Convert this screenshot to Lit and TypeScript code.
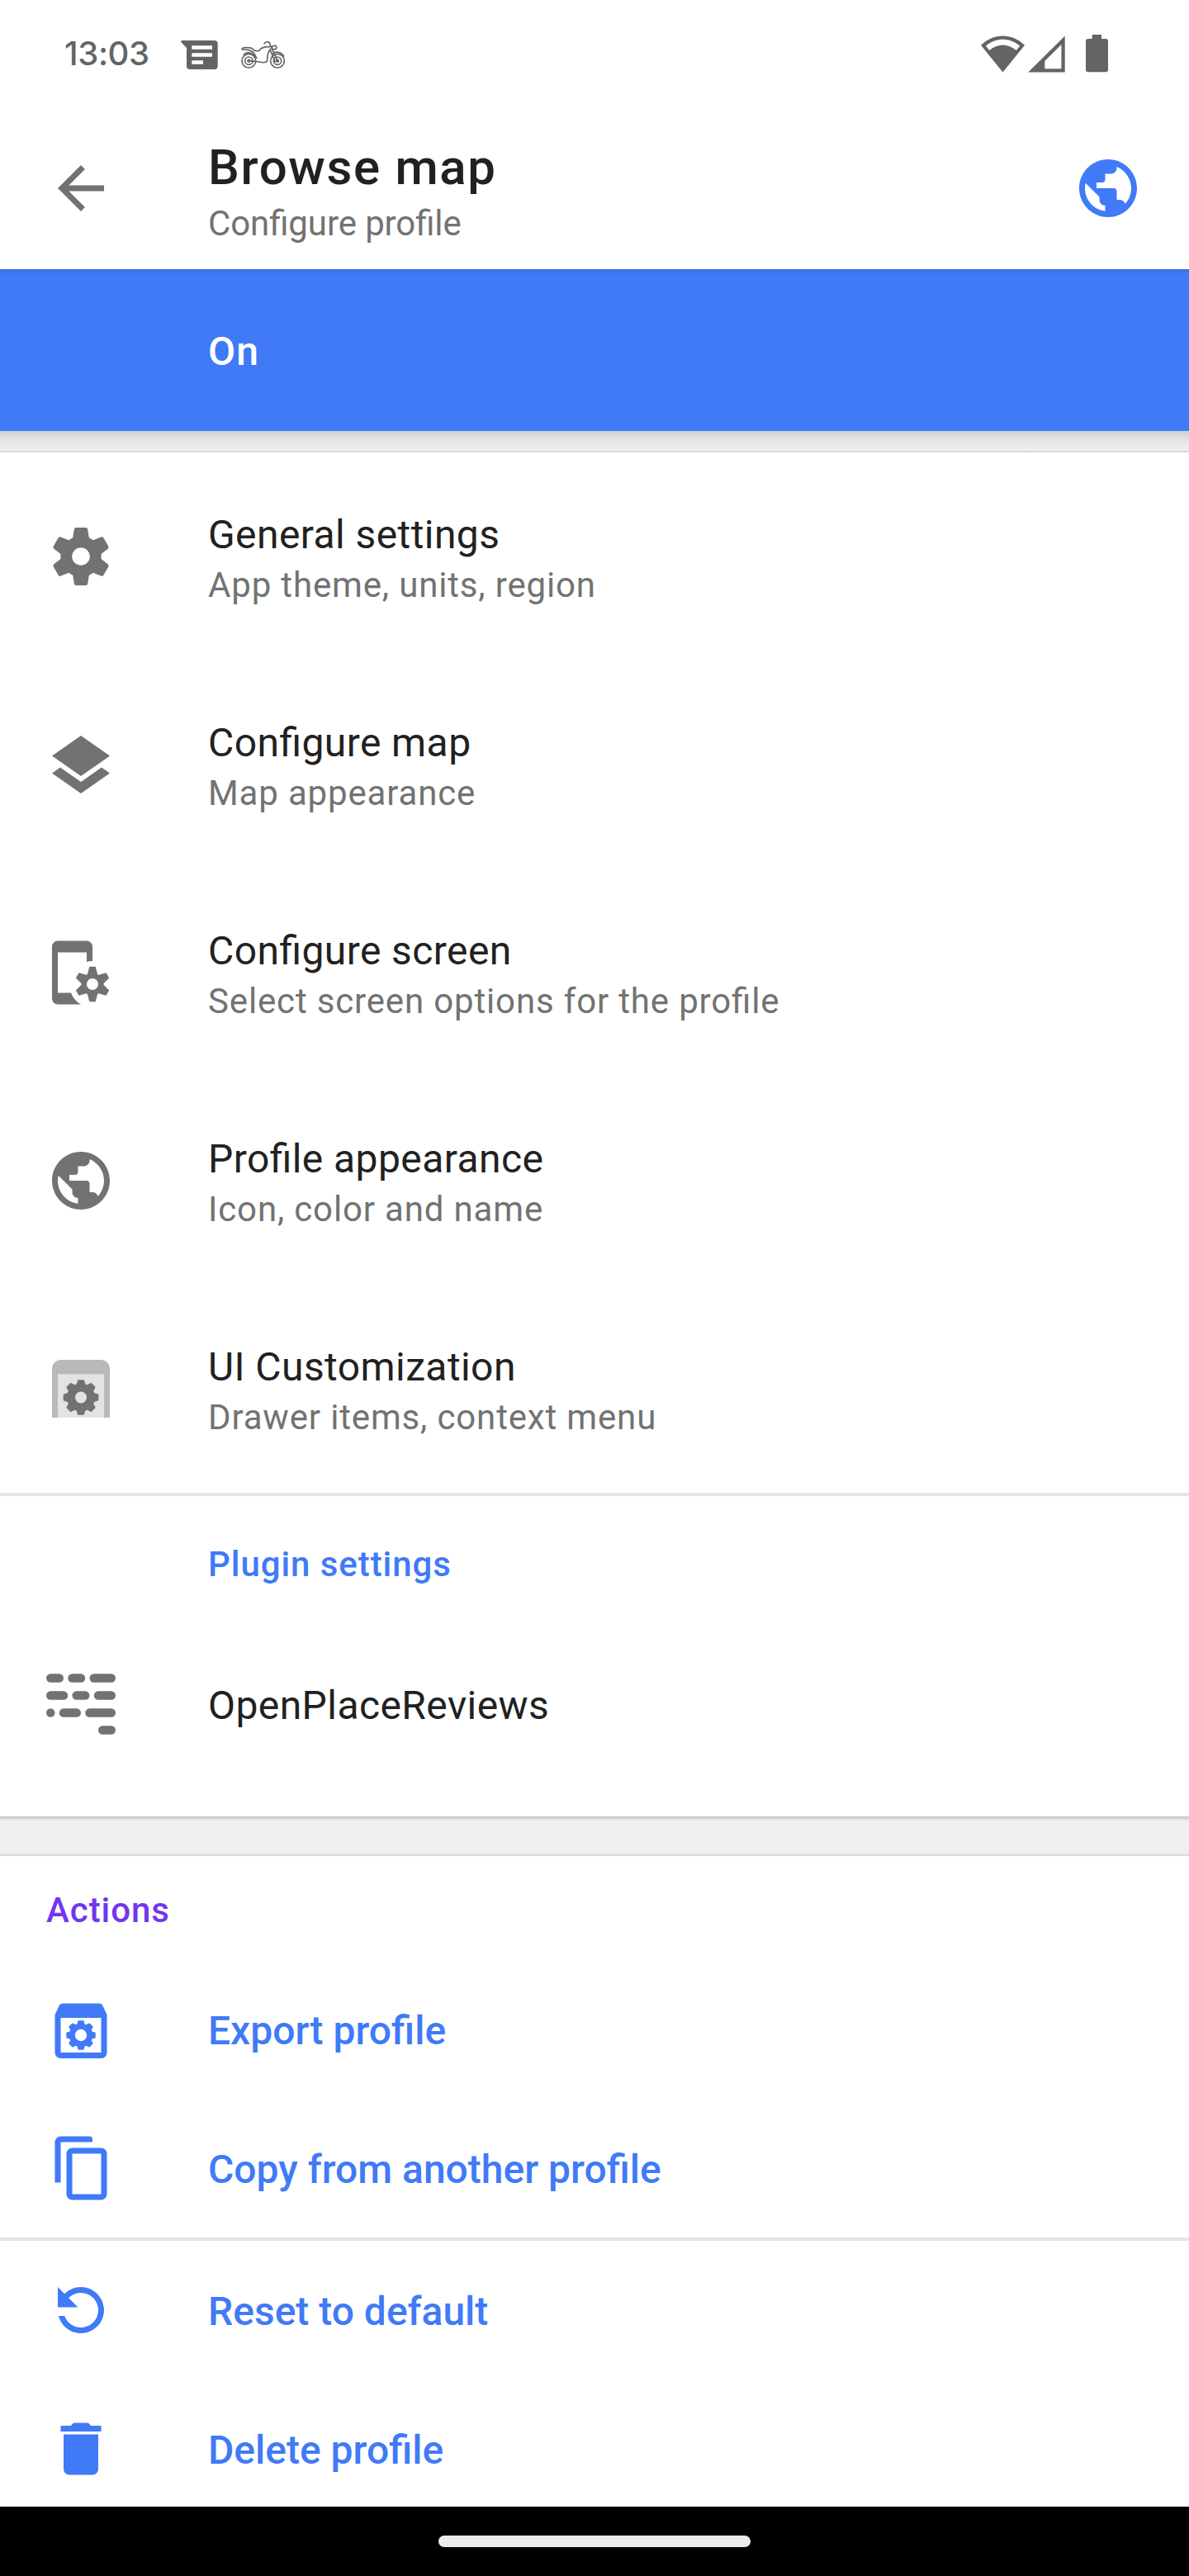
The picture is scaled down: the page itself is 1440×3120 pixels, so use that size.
import { LitElement, html, css, svg, nothing, TemplateResult } from "lit";
import { customElement, property } from "lit/decorators.js";

/** Outline of a straight-toothed cog around (cx, cy), with a round hole cut out. */
function cog(
  cx: number, cy: number, teeth: number,
  outer: number, inner: number, top: number, base: number,
  hole: number, round = 0,
): string {
  const parts: string[] = [];
  for (let i = 0; i < teeth; i++) {
    const a = (i * 2 * Math.PI) / teeth;
    const p = (x: number, y: number) =>
      `${(cx + x * Math.cos(a) - y * Math.sin(a)).toFixed(2)} ${(cy + x * Math.sin(a) + y * Math.cos(a)).toFixed(2)}`;
    parts.push(`${i ? "L" : "M"}${p(-base, -inner)}`);
    if (round) {
      const side = (base - top) * (round / (outer - inner));
      parts.push(`L${p(-top - side, -outer + round)}Q${p(-top, -outer)} ${p(-top + round, -outer)}`);
      parts.push(`L${p(top - round, -outer)}Q${p(top, -outer)} ${p(top + side, -outer + round)}`);
    } else {
      parts.push(`L${p(-top, -outer)}L${p(top, -outer)}`);
    }
    parts.push(`L${p(base, -inner)}`);
  }
  const h = hole;
  return `${parts.join("")}ZM${cx - h} ${cy}a${h} ${h} 0 1 0 ${2 * h} 0a${h} ${h} 0 1 0 ${-2 * h} 0z`;
}

const dashes = [
  [0, 1.5, 6], [7.5, 1.5, 6], [15, 1.5, 9],
  [0, 7.5, 7.5], [9, 7.5, 6], [16.5, 7.5, 7.5],
  [0, 13.5, 3], [4.5, 13.5, 7.5], [13.5, 13.5, 10.5],
  [18, 19.5, 6],
];

const icons: Record<string, TemplateResult> = {
  back: svg`<path d="M20 11H7.83l5.59-5.59L12 4l-8 8 8 8 1.41-1.41L7.83 13H20v-2z"/>`,
  globe: svg`<path d="M12 2C6.48 2 2 6.48 2 12s4.48 10 10 10 10-4.48 10-10S17.52 2 12 2zm-1 17.93c-3.95-.49-7-3.85-7-7.93 0-.62.08-1.21.21-1.79L9 15v1c0 1.1.9 2 2 2v1.93zm6.9-2.54c-.26-.81-1-1.39-1.9-1.39h-1v-3c0-.55-.45-1-1-1H8v-2h2c.55 0 1-.45 1-1V7h2c1.1 0 2-.9 2-2v-.41c2.93 1.19 5 4.06 5 7.41 0 2.08-.8 3.97-2.1 5.39z"/>`,
  settings: svg`<path fill-rule="evenodd" d="${cog(12, 12, 6, 10, 6.5, 2.25, 2.8, 3.08, 0.6)}"/>`,
  layers: svg`<path d="M12 2L2 9l10 7 10-7zM4.85 13L2 15l10 7 10-7-2.85-2L12 18z"/>`,
  screen: svg`
    <path d="M4 1h10a2 2 0 0 1 2 2v5q-1 0-2 .25V5H4v14h4.6c.6 1.7 1.8 3.1 3.4 4H4a2 2 0 0 1-2-2V3a2 2 0 0 1 2-2z"/>
    <path fill-rule="evenodd" d="${cog(16, 16, 6, 6.05, 3.45, 1.05, 1.75, 2)}"/>`,
  drawer: svg`
    <path fill="#b9b9b9" d="M5 2h14a3 3 0 0 1 3 3v17H2V5a3 3 0 0 1 3-3z"/>
    <path fill="#e3e3e3" d="M4 6.9h16V22H4z"/>
    <path fill-rule="evenodd" d="${cog(12, 15, 8, 6.1, 4.6, 1.05, 1.55, 2)}"/>`,
  reviews: svg`${dashes.map(([x, y, w]) => svg`<rect x=${x} y=${y} width=${w} height="3" rx="1.5"/>`)}`,
  exportBox: svg`
    <path fill-rule="evenodd" d="M5.75 3h12.5c.6 0 1 .25 1.3.8L21 6.9V20a2 2 0 0 1-2 2H5a2 2 0 0 1-2-2V6.9l1.45-3.1c.3-.55.7-.8 1.3-.8zM5 8v12h14V8z"/>
    <path fill-rule="evenodd" d="${cog(12, 14, 8, 5.05, 3.85, 0.95, 1.3, 2.05)}"/>`,
  copy: svg`<path fill-rule="evenodd" d="M5 1h10a1 1 0 0 1 1 1v1H5v14H3V3a2 2 0 0 1 2-2zM9 5h10a2 2 0 0 1 2 2v14a2 2 0 0 1-2 2H9a2 2 0 0 1-2-2V7a2 2 0 0 1 2-2zM9 7v14h10V7z"/>`,
  reset: svg`<path transform="matrix(-1 0 0 1 24 0)" d="M17.65 6.35C16.2 4.9 14.21 4 12 4c-4.42 0-7.99 3.58-7.99 8s3.57 8 7.99 8c3.73 0 6.84-2.55 7.73-6h-2.08c-.82 2.33-3.04 4-5.65 4-3.31 0-6-2.69-6-6s2.69-6 6-6c1.66 0 3.14.69 4.22 1.78L13 11h7V4l-2.35 2.35z"/>`,
  trash: svg`<path d="M6 19c0 1.1.9 2 2 2h8c1.1 0 2-.9 2-2V7H6v12zM19 4h-3.5l-1-1h-5l-1 1H5v2h14V4z"/>`,
};

@customElement("app-icon")
export class AppIcon extends LitElement {
  @property() name = "";
  static styles = css`
    :host { display: block; flex: none; width: 84px; height: 84px; }
    .glyph { display: block; width: 84px; height: 84px; fill: currentColor; }
  `;
  render() {
    return html`<svg class="glyph" viewBox="0 0 24 24">${icons[this.name]}</svg>`;
  }
}

@customElement("status-bar")
export class StatusBar extends LitElement {
  static styles = css`
    :host { display: flex; justify-content: space-between; height: 130px; color: #646464; }
    .left { display: flex; padding-left: 78px; }
    .time {
      width: 141px; padding-top: 41px; font: 450 40px/48px Inter, sans-serif;
      letter-spacing: -0.4px; white-space: nowrap;
    }
    .message { width: 45px; height: 35px; margin-top: 48.7px; fill: currentColor; }
    .bike {
      width: 54px; height: 36px; margin: 48px 0 0 28px; fill: none;
      stroke: currentColor; stroke-width: 5; stroke-linecap: round; stroke-linejoin: round;
    }
    .right { width: 252px; height: 130px; fill: currentColor; }
  `;
  render() {
    return html`
      <div class="left">
        <div class="time">13:03</div>
        <svg class="message" viewBox="0 0 135 105">
          <path fill-rule="evenodd" d="M4 0H122a12 12 0 0 1 12 12V93a12 12 0 0 1-12 12H33a12 12 0 0 1-12-12V27L1 6Q-1 0 4 0zM40 19V32H114V19zM40 46V59H114V46zM40 73V86H81V73z"/>
        </svg>
        <svg class="bike" viewBox="24 36 162 108">
          <circle cx="52" cy="113" r="25"/><circle cx="52" cy="113" r="14"/><circle cx="52" cy="113" r="4"/>
          <circle cx="156" cy="113" r="25"/><circle cx="156" cy="113" r="14"/><circle cx="156" cy="113" r="4"/>
          <path d="M27 72C26 65 38 64 50 65C63 65 67 69 72 76L89 77C95 66 106 61 128 62M27 72L49 73C64 75 74 88 80 103M34 90C46 78 66 84 73 99M54 113L90 117C104 120 114 121 118 115C122 98 116 86 131 70M108 51C110 44 124 41 128 48C127 54 130 57 133 62L156 113M129 72L147 116M136 60L149 57Q155 63 151 70L138 72ZM137 88C152 76 170 82 179 96"/>
        </svg>
      </div>
      <svg class="right" viewBox="1188 0 252 130">
        <path fill-rule="evenodd" d="M1214.5 87.5L1188 54.8C1203.5 39.7 1225.5 39.7 1241 54.8ZM1193.9 55.6L1198.2 61C1208 52.2 1221 52.2 1230.8 61L1235.2 55.6C1223 45.1 1206 45.1 1193.9 55.6Z"/>
        <path fill-rule="evenodd" d="M1289.7 43.5V87.6H1245.3ZM1285.4 54L1265.3 74V83.3H1285.4Z"/>
        <path d="M1322.7 42H1334V47H1339.2a2.8 2.8 0 0 1 2.8 2.8V84.5a2.8 2.8 0 0 1-2.8 2.8H1317.8a2.8 2.8 0 0 1-2.8-2.8V49.8a2.8 2.8 0 0 1 2.8-2.8H1322.7Z"/>
      </svg>
    `;
  }
}

interface Setting { icon: string; title: string; summary: string; }
interface Action { icon: string; title: string; }

const settings: Setting[] = [
  { icon: "settings", title: "General settings", summary: "App theme, units, region" },
  { icon: "layers", title: "Configure map", summary: "Map appearance" },
  { icon: "screen", title: "Configure screen", summary: "Select screen options for the profile" },
  { icon: "globe", title: "Profile appearance", summary: "Icon, color and name" },
  { icon: "drawer", title: "UI Customization", summary: "Drawer items, context menu" },
];

const actionGroups: Action[][] = [
  [
    { icon: "exportBox", title: "Export profile" },
    { icon: "copy", title: "Copy from another profile" },
  ],
  [
    { icon: "reset", title: "Reset to default" },
    { icon: "trash", title: "Delete profile" },
  ],
];

@customElement("app-root")
export class AppRoot extends LitElement {
  static styles = css`
    :host {
      display: flex; flex-direction: column; width: 1440px; height: 3120px;
      overflow: hidden; background: #fff; color: #212121;
      font-family: Roboto, sans-serif; white-space: nowrap;
      font-feature-settings: "liga" 1;
    }
    .toolbar {
      display: flex; flex: none; height: 196px; box-sizing: border-box;
      padding: 0 56px; color: #727272;
    }
    .toolbar app-icon { margin-top: 56px; }
    .heading { flex: 1; padding: 36.5px 0 0 112px; }
    .name { font-size: 60px; line-height: 72px; font-weight: 500; letter-spacing: 1.65px; color: #212121; }
    .caption { margin-top: 7px; font-size: 42px; line-height: 50px; letter-spacing: -0.1px; }
    .accent { color: #407af7; }
    .switch {
      display: flex; align-items: center; flex: none; height: 196px; box-sizing: border-box;
      padding: 2px 0 0 252px; color: #fff;
      background: linear-gradient(#3a6cdc, #407af7 6px);
      font-size: 48px; font-weight: 500; letter-spacing: 1.2px;
    }
    .gap {
      flex: none; height: 26px;
      background: linear-gradient(#d0d0d0, #dedede 7px, #e8e8e8 14px, #eeeeee 22px, #ececec 23.5px, #d9d9d9 24px);
    }
    .gap.wide {
      height: 48px;
      background: linear-gradient(#c2c2c2, #d2d2d2 2px, #e6e6e6 4px, #efefef 6px, #efefef 44px, #ececec 46px, #d9d9d9 46px);
    }
    .list { display: flex; flex-direction: column; flex: none; }
    .row { display: flex; height: 252px; box-sizing: border-box; padding-left: 56px; }
    .row app-icon { margin-top: 84px; color: #727272; }
    .body { padding: 72px 0 0 112px; }
    .title { font-size: 48px; line-height: 56px; letter-spacing: 0.42px; }
    .summary { margin-top: 8px; font-size: 42px; line-height: 50px; letter-spacing: 0.84px; color: #727272; }
    .rule { flex: none; height: 4px; background: #e5e5e5; }
    .section { font-size: 42px; line-height: 50px; font-weight: 500; letter-spacing: 0.94px; }
    .plugins { height: 168px; box-sizing: border-box; padding: 58px 0 0 252px; }
    .plugin { display: flex; align-items: center; gap: 112px; height: 168px; padding: 0 0 52px 56px; }
    .plugin app-icon { color: #727272; }
    .plugin .title { padding-top: 3px; }
    .actions { height: 128px; box-sizing: border-box; padding: 41px 0 0 56px; color: #7236ef; }
    .scroll { flex: 1; min-height: 0; overflow: hidden; }
    .action {
      display: flex; align-items: center; gap: 112px; height: 168px; padding-left: 56px;
      font-size: 48px; line-height: 56px; font-weight: 500;
    }
    .action app-icon { margin-bottom: 4px; }
    .scroll .rule { margin: -2px 0 2px; }
    .nav {
      display: flex; flex: none; justify-content: center; align-items: center;
      height: 84px; background: #000;
    }
    .pill { width: 378px; height: 14px; border-radius: 7px; background: #ebebeb; }
  `;
  render() {
    return html`
      <status-bar></status-bar>
      <div class="toolbar">
        <app-icon name="back"></app-icon>
        <div class="heading">
          <div class="name">Browse map</div>
          <div class="caption">Configure profile</div>
        </div>
        <app-icon class="accent" name="globe"></app-icon>
      </div>
      <div class="switch">On</div>
      <div class="gap"></div>
      <div class="list">
        ${settings.map((s) => html`
          <div class="row">
            <app-icon name=${s.icon}></app-icon>
            <div class="body">
              <div class="title">${s.title}</div>
              <div class="summary">${s.summary}</div>
            </div>
          </div>`)}
      </div>
      <div class="rule"></div>
      <div class="section plugins accent">Plugin settings</div>
      <div class="plugin">
        <app-icon name="reviews"></app-icon>
        <div class="title">OpenPlaceReviews</div>
      </div>
      <div class="gap wide"></div>
      <div class="section actions">Actions</div>
      <div class="scroll">
        ${actionGroups.map((group, i) => html`
          ${i ? html`<div class="rule"></div>` : nothing}
          ${group.map((a) => html`
            <div class="action accent">
              <app-icon name=${a.icon}></app-icon>
              <div>${a.title}</div>
            </div>`)}`)}
      </div>
      <div class="nav"><div class="pill"></div></div>
    `;
  }
}
